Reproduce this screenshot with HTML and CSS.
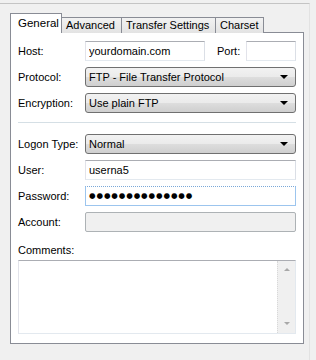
FILE: index.html
```html
<!DOCTYPE html>
<html lang="en">
<head>
    <meta charset="UTF-8">
    <title>Site Manager - General</title>
    <link rel="stylesheet" href="styles.css">
</head>
<body>

    <div class="window">
        <div class="tabs">
            <div class="tab active">General</div>
            <div class="tab">Advanced</div>
            <div class="tab">Transfer Settings</div>
            <div class="tab">Charset</div>
        </div>

        <div class="panel">
            <div class="row">
                <label class="label">Host:</label>
                <input type="text" class="field host-field" value="yourdomain.com">
                <label class="label port-label">Port:</label>
                <input type="text" class="field port-field">
            </div>
            <div class="row">
                <label class="label">Protocol:</label>
                <div class="select"><span class="select-text">FTP - File Transfer Protocol</span><span class="select-arrow"></span></div>
            </div>
            <div class="row">
                <label class="label">Encryption:</label>
                <div class="select"><span class="select-text">Use plain FTP</span><span class="select-arrow"></span></div>
            </div>

            <div class="separator"></div>

            <div class="row">
                <label class="label">Logon Type:</label>
                <div class="select"><span class="select-text">Normal</span><span class="select-arrow"></span></div>
            </div>
            <div class="row">
                <label class="label">User:</label>
                <input type="text" class="field" value="userna5">
            </div>
            <div class="row">
                <label class="label">Password:</label>
                <div class="field password-field"><span class="dots">●●●●●●●●●●●●●●</span></div>
            </div>
            <div class="row">
                <label class="label">Account:</label>
                <input type="text" class="field" disabled>
            </div>

            <div class="comments-group">
                <label class="label">Comments:</label>
                <div class="comments">
                    <textarea class="comments-text"></textarea>
                    <div class="scrollbar">
                        <span class="scroll-arrow up"></span>
                        <span class="scroll-arrow down"></span>
                    </div>
                </div>
            </div>
        </div>
    </div>

</body>
</html>
```

FILE: styles.css
```css
body {
    margin: 0;
    background-color: #f0f0f0;
    font-family: 'Liberation Sans', Arial, sans-serif;
    font-size: 11px;
    color: #000;
}

.window {
    width: 310px;
    height: 357px;
    margin-top: 3px;
    border-top: 1px solid #c4c4c4;
    border-right: 1px solid #e2e2e2;
    box-sizing: border-box;
    padding: 10px 0 0 10px;
}

.tabs {
    display: flex;
    align-items: flex-end;
    height: 19px;
    position: relative;
    z-index: 1;
    margin-bottom: -1px;
}

.tab {
    height: 16px;
    line-height: 15px;
    padding: 0 4px;
    box-sizing: border-box;
    white-space: nowrap;
    border: 1px solid #898c95;
    border-bottom: none;
    border-left: none;
    background: linear-gradient(#f2f2f2, #e3e3e3);
}

.tab:nth-child(2) {
    width: 60px;
}

.tab:nth-child(3) {
    width: 94px;
}

.tab:nth-child(4) {
    width: 48px;
}

.tab.active {
    width: 52px;
    height: 20px;
    line-height: 18px;
    padding-left: 7px;
    border-left: 1px solid #898c95;
    background: #fff;
    font-size: 11.5px;
}

.panel {
    width: 294px;
    height: 312px;
    box-sizing: border-box;
    border: 1px solid #898c95;
    background-color: #fff;
    padding: 8px 7px 7px 7px;
    display: flex;
    flex-direction: column;
    gap: 6px;
}

.row {
    display: flex;
    align-items: center;
    height: 20px;
}

.label {
    width: 67px;
    flex-shrink: 0;
    line-height: 14px;
}

.field {
    flex: 1;
    min-width: 0;
    height: 20px;
    box-sizing: border-box;
    margin: 0;
    padding: 0 3px;
    border: 1px solid #e3e9ef;
    border-top-color: #abadb3;
    border-left-color: #e2e3ea;
    border-right-color: #dbdfe6;
    font-family: inherit;
    font-size: 11px;
    color: #000;
    background-color: #fff;
    outline: none;
}

.host-field {
    flex: none;
    width: 120px;
}

.port-label {
    width: 29px;
    margin-left: 12px;
}

.port-field {
    flex: none;
    width: 50px;
}

.field:disabled {
    background-color: #f0f0f0;
    border-color: #adb2b5;
    border-radius: 2px;
}

.password-field {
    display: flex;
    align-items: center;
    border-color: #9cc5ee;
    border-top: 1px dotted #7aa8d8;
}

.dots {
    font-family: 'DejaVu Sans', sans-serif;
    font-size: 7.5px;
    letter-spacing: 0.9px;
    line-height: 1;
}

.select {
    flex: 1;
    height: 20px;
    box-sizing: border-box;
    border: 1px solid #707070;
    border-radius: 3px;
    background: linear-gradient(#f2f2f2 0%, #ebebeb 48%, #dddddd 52%, #cfcfcf 100%);
    display: flex;
    align-items: center;
    padding: 0 7px 0 3px;
}

.select-text {
    flex: 1;
}

.select-arrow {
    width: 0;
    height: 0;
    border-left: 4px solid transparent;
    border-right: 4px solid transparent;
    border-top: 4px solid #000;
}

.separator {
    height: 1px;
    background-color: #d5dfe5;
    margin: 3px 0 5px 0;
}

.comments-group {
    display: flex;
    flex-direction: column;
    margin-top: 5px;
}

.comments {
    display: flex;
    height: 74px;
    margin-top: 3px;
    box-sizing: border-box;
    border: 1px solid #e3e9ef;
    border-top-color: #abadb3;
    border-left-color: #e2e3ea;
}

.comments-text {
    flex: 1;
    border: none;
    resize: none;
    outline: none;
    margin: 0;
    padding: 2px 3px;
    font-family: inherit;
    font-size: 11px;
}

.scrollbar {
    width: 17px;
    background-color: #f0f0f0;
    border-left: 1px dotted #d8d8d8;
    display: flex;
    flex-direction: column;
    justify-content: space-between;
    align-items: center;
    padding: 7px 0 8px 0;
}

.scroll-arrow {
    width: 0;
    height: 0;
    border-left: 3px solid transparent;
    border-right: 3px solid transparent;
}

.scroll-arrow.up {
    border-bottom: 3px solid #a8a8a8;
}

.scroll-arrow.down {
    border-top: 3px solid #a8a8a8;
}
```
